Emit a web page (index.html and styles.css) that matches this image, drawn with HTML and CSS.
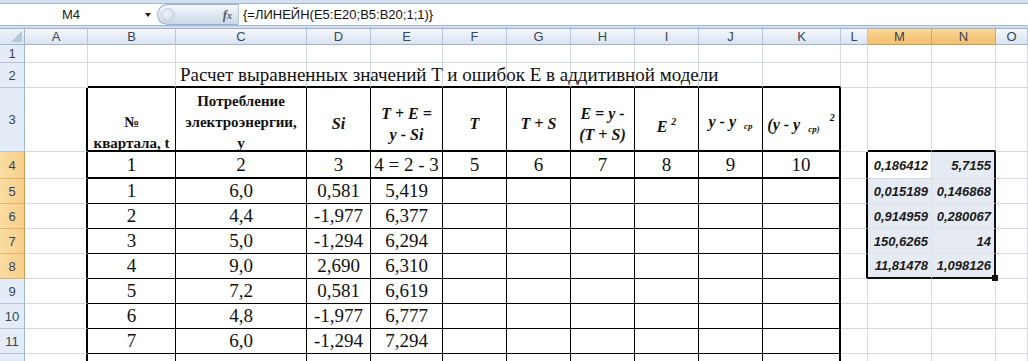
FILE: index.html
```html
<!DOCTYPE html>
<html lang="ru">
<head>
<meta charset="utf-8">
<title>Excel</title>
<link rel="stylesheet" href="styles.css">
</head>
<body>
<div class="app">
  <div class="topband"></div>
  <div class="fbar">
    <div class="namebox"><span class="cellref">M4</span><span class="dd"></span></div>
    <div class="pill"><span class="knob"></span><span class="fx">f<span class="fxx">x</span></span></div>
    <div class="formula">{=ЛИНЕЙН(E5:E20;B5:B20;1;1)}</div>
  </div>
  <div class="gap"></div>
  <table class="sheet">
    <colgroup>
      <col class="w-rh"><col class="w-a"><col class="w-b"><col class="w-c"><col class="w-d"><col class="w-e">
      <col class="w-64"><col class="w-64"><col class="w-64"><col class="w-64"><col class="w-64">
      <col class="w-k"><col class="w-l"><col class="w-64"><col class="w-64"><col class="w-o">
    </colgroup>
    <tr class="h-hdr">
      <td class="corner"><span class="tri"></span></td>
      <td class="ch">A</td><td class="ch">B</td><td class="ch">C</td><td class="ch">D</td><td class="ch">E</td>
      <td class="ch">F</td><td class="ch">G</td><td class="ch">H</td><td class="ch">I</td><td class="ch">J</td>
      <td class="ch">K</td><td class="ch">L</td><td class="ch sel">M</td><td class="ch sel">N</td><td class="ch">O</td>
    </tr>
    <tr class="h-1">
      <td class="rh">1</td>
      <td></td><td></td><td></td><td></td><td></td><td></td><td></td><td></td><td></td><td></td><td></td><td></td><td></td><td></td><td></td>
    </tr>
    <tr class="h-2">
      <td class="rh">2</td>
      <td></td><td class="tbt"></td>
      <td class="tbt title-cell"><span class="title">Расчет выравненных значений T и ошибок E в аддитивной модели</span></td>
      <td class="tbt"></td><td class="tbt"></td><td class="tbt"></td><td class="tbt"></td><td class="tbt"></td><td class="tbt"></td><td class="tbt"></td><td class="tbt"></td>
      <td></td><td></td><td></td><td></td>
    </tr>
    <tr class="h-3">
      <td class="rh">3</td>
      <td class="edge"></td>
      <td class="t tb hd bottom"><div class="lines">№<br>квартала, t</div></td>
      <td class="t tb hd bottom"><div class="lines">Потребление<br>электроэнергии,<br>у</div></td>
      <td class="t tb hd it mid">Si</td>
      <td class="t tb hd it mid">T + E =<br>y - Si</td>
      <td class="t tb hd it mid">T</td>
      <td class="t tb hd it mid">T + S</td>
      <td class="t tb hd it mid">E = y -<br>(T + S)</td>
      <td class="t tb hd it mid">E <sup class="sp">2</sup></td>
      <td class="t tb hd it mid">y - y <sub class="sb">ср</sub></td>
      <td class="t tb tr hd it mid">(y - y <sub class="sb">ср)</sub> <sup class="sp2">2</sup></td>
      <td></td><td class="tbt"></td><td class="tbt"></td><td></td>
    </tr>
    <tr class="h-4">
      <td class="rh sel">4</td>
      <td class="edge"></td>
      <td class="t tb n">1</td><td class="t tb n">2</td><td class="t tb n">3</td><td class="t tb n">4 = 2 - 3</td>
      <td class="t tb n">5</td><td class="t tb n">6</td><td class="t tb n">7</td><td class="t tb n">8</td><td class="t tb n">9</td><td class="t tb tr n">10</td>
      <td class="edge"></td><td class="r active">0,186412</td><td class="r inrange sr">5,7155</td><td></td>
    </tr>
    <tr class="h-d">
      <td class="rh sel">5</td><td class="edge"></td>
      <td class="t n">1</td><td class="t n">6,0</td><td class="t n">0,581</td><td class="t n">5,419</td>
      <td class="t"></td><td class="t"></td><td class="t"></td><td class="t"></td><td class="t"></td><td class="t tr"></td>
      <td class="edge"></td><td class="r inrange">0,015189</td><td class="r inrange sr">0,146868</td><td></td>
    </tr>
    <tr class="h-d">
      <td class="rh sel">6</td><td class="edge"></td>
      <td class="t n">2</td><td class="t n">4,4</td><td class="t n">-1,977</td><td class="t n">6,377</td>
      <td class="t"></td><td class="t"></td><td class="t"></td><td class="t"></td><td class="t"></td><td class="t tr"></td>
      <td class="edge"></td><td class="r inrange">0,914959</td><td class="r inrange sr">0,280067</td><td></td>
    </tr>
    <tr class="h-d">
      <td class="rh sel">7</td><td class="edge"></td>
      <td class="t n">3</td><td class="t n">5,0</td><td class="t n">-1,294</td><td class="t n">6,294</td>
      <td class="t"></td><td class="t"></td><td class="t"></td><td class="t"></td><td class="t"></td><td class="t tr"></td>
      <td class="edge"></td><td class="r inrange">150,6265</td><td class="r inrange sr">14</td><td></td>
    </tr>
    <tr class="h-d">
      <td class="rh sel">8</td><td class="edge"></td>
      <td class="t n">4</td><td class="t n">9,0</td><td class="t n">2,690</td><td class="t n">6,310</td>
      <td class="t"></td><td class="t"></td><td class="t"></td><td class="t"></td><td class="t"></td><td class="t tr"></td>
      <td class="edge"></td><td class="r inrange sbm">11,81478</td><td class="r inrange sr sbm handle">1,098126</td><td></td>
    </tr>
    <tr class="h-d">
      <td class="rh">9</td><td class="edge"></td>
      <td class="t n">5</td><td class="t n">7,2</td><td class="t n">0,581</td><td class="t n">6,619</td>
      <td class="t"></td><td class="t"></td><td class="t"></td><td class="t"></td><td class="t"></td><td class="t tr"></td>
      <td></td><td></td><td></td><td></td>
    </tr>
    <tr class="h-d">
      <td class="rh">10</td><td class="edge"></td>
      <td class="t n">6</td><td class="t n">4,8</td><td class="t n">-1,977</td><td class="t n">6,777</td>
      <td class="t"></td><td class="t"></td><td class="t"></td><td class="t"></td><td class="t"></td><td class="t tr"></td>
      <td></td><td></td><td></td><td></td>
    </tr>
    <tr class="h-d">
      <td class="rh">11</td><td class="edge"></td>
      <td class="t n">7</td><td class="t n">6,0</td><td class="t n">-1,294</td><td class="t n">7,294</td>
      <td class="t"></td><td class="t"></td><td class="t"></td><td class="t"></td><td class="t"></td><td class="t tr"></td>
      <td></td><td></td><td></td><td></td>
    </tr>
    <tr class="h-d">
      <td class="rh"></td><td class="edge"></td>
      <td class="t"></td><td class="t"></td><td class="t"></td><td class="t"></td>
      <td class="t"></td><td class="t"></td><td class="t"></td><td class="t"></td><td class="t"></td><td class="t tr"></td>
      <td></td><td></td><td></td><td></td>
    </tr>
  </table>
</div>
</body>
</html>
```
FILE: styles.css
```css
html, body {
  margin: 0;
  padding: 0;
  background: #ffffff;
}
.app {
  width: 1028px;
  height: 361px;
  overflow: hidden;
  font-family: "Liberation Sans", Arial, sans-serif;
}
.topband {
  height: 3px;
  background: #d3dfef;
  border-bottom: 1px solid #a3b8d3;
}
.fbar {
  height: 21px;
  display: flex;
  align-items: stretch;
  background: #ffffff;
}
.namebox {
  width: 157px;
  display: flex;
  align-items: center;
}
.cellref {
  width: 142px;
  text-align: center;
  font-size: 13px;
  color: #222;
}
.dd {
  width: 0;
  height: 0;
  border-left: 3px solid transparent;
  border-right: 3px solid transparent;
  border-top: 4px solid #222;
  margin-left: 3px;
}
.pill {
  width: 82px;
  border: 1px solid #9cb1cc;
  border-right: 1px solid #b6c6da;
  border-radius: 11px 0 0 11px;
  background: linear-gradient(#f7f9fc, #dde6f2 55%, #cbd8e9);
  display: flex;
  align-items: center;
  justify-content: space-between;
  padding: 0 6px 0 3px;
  box-sizing: border-box;
}
.knob {
  width: 12px;
  height: 12px;
  border-radius: 50%;
  background: radial-gradient(circle at 40% 40%, #f4f7fb, #c3cfdf);
  border: 1px solid #c6d2e2;
}
.fx {
  font-family: "Liberation Serif", serif;
  font-style: italic;
  font-weight: bold;
  font-size: 13px;
  color: #555c66;
}
.fxx {
  font-size: 10px;
}
.formula {
  flex: 1;
  display: flex;
  align-items: center;
  padding-left: 4px;
  font-size: 13px;
  color: #111;
}
.gap {
  height: 2px;
  border-top: 1px solid #a3b8d3;
  border-bottom: 1px solid #9cb1cc;
  background: #d3dfef;
}
.sheet {
  border-collapse: separate;
  border-spacing: 0;
  table-layout: fixed;
  width: 1028px;
}
.w-rh { width: 25px; }
.w-a { width: 63px; }
.w-b { width: 88px; }
.w-c { width: 131px; }
.w-d { width: 64px; }
.w-e { width: 72px; }
.w-64 { width: 64px; }
.w-k { width: 78px; }
.w-l { width: 27px; }
.w-o { width: 32px; }

.sheet td {
  padding: 0;
  box-sizing: border-box;
  border-right: 1px solid #d5dae2;
  border-bottom: 1px solid #d5dae2;
  overflow: visible;
  white-space: nowrap;
  vertical-align: bottom;
}
.h-hdr { height: 16px; }
.h-1 { height: 18px; }
.h-2 { height: 25px; }
.h-3 { height: 64px; }
.h-4 { height: 27px; }
.h-d { height: 25px; }

.sheet td.corner {
  background: linear-gradient(#eef3f9, #dbe4f0);
  border-right: 1px solid #9eb4cf;
  border-bottom: 1px solid #9eb4cf;
  position: relative;
}
.tri {
  position: absolute;
  right: 2px;
  bottom: 2px;
  width: 0;
  height: 0;
  border-left: 11px solid transparent;
  border-bottom: 11px solid #b5c5da;
}
.sheet td.ch {
  background: linear-gradient(#f6f8fc, #e4ebf5 60%, #dbe3ee);
  border-right: 1px solid #b4c5da;
  border-bottom: 1px solid #9eb4cf;
  text-align: center;
  vertical-align: middle;
  font-size: 13px;
  color: #35465d;
}
.sheet td.rh {
  background: #e4ecf7;
  border-right: 1px solid #9eb4cf;
  border-bottom: 1px solid #b4c5da;
  text-align: center;
  vertical-align: middle;
  font-size: 13px;
  color: #35465d;
}
.sheet td.ch.sel {
  background: linear-gradient(#fbd99a, #f6c67a 60%, #f3c074);
  border-right: 1px solid #d9a95c;
  border-bottom: 1px solid #c99a4f;
}
.sheet td.rh.sel {
  background: linear-gradient(90deg, #fbdca2, #f8cf8a);
  border-right: 1px solid #c99a4f;
  border-bottom: 1px solid #e2b46b;
}

.title-cell {
  padding-left: 4px !important;
  vertical-align: bottom;
}
.title {
  font-family: "Liberation Serif", "Times New Roman", serif;
  font-size: 19px;
  line-height: 22px;
  color: #111;
}
.sheet td.tbt {
  border-bottom: 2px solid #000;
}
.sheet td.edge {
  border-right: 2px solid #000;
}
.sheet td.t {
  border-right: 1px solid #000;
  border-bottom: 1px solid #000;
  text-align: center;
  vertical-align: middle;
  font-family: "Liberation Serif", "Times New Roman", serif;
  color: #111;
}
.sheet td.tb {
  border-bottom: 2px solid #000;
}
.sheet td.tr {
  border-right: 2px solid #000;
}
.hd {
  font-weight: bold;
  font-size: 15px;
  line-height: 21px;
  white-space: normal !important;
}
.sheet td.bottom {
  vertical-align: bottom;
}
.lines {
  margin-bottom: -4px;
}
.sheet td.mid {
  padding-top: 9px;
}
.it {
  font-style: italic;
  font-size: 16px;
}
.sp {
  font-size: 10px;
  vertical-align: 7px;
}
.sp2 {
  font-size: 10px;
  vertical-align: 9px;
  margin-left: 6px;
}
.sb {
  font-size: 9px;
  vertical-align: -2px;
  margin-left: 4px;
}
.n {
  font-size: 19px;
  line-height: 22px;
}

.sheet td.r {
  text-align: right;
  vertical-align: middle;
  font-family: "Liberation Sans", Arial, sans-serif;
  font-weight: bold;
  font-style: italic;
  font-size: 13px;
  color: #1b1b1b;
  padding-right: 3px;
  border-right: 1px solid #d5dae2;
  border-bottom: 1px solid #d5dae2;
}
.sheet td.inrange {
  background: #e6eaf3;
  border-right-color: #dfe4ec;
  border-bottom-color: #dfe4ec;
}
.sheet td.active {
  background: #ffffff;
}
.sheet td.sr {
  border-right: 2px solid #111;
}
.sheet td.sbm {
  border-bottom: 2px solid #111;
}
.sheet td.handle {
  position: relative;
}
.sheet td.handle::after {
  content: "";
  position: absolute;
  right: -4px;
  bottom: -4px;
  width: 6px;
  height: 6px;
  background: #111;
}
```
